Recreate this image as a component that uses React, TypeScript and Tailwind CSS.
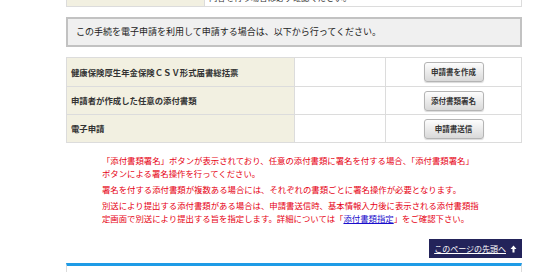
const jp = { fontFamily: '"Noto Sans CJK JP", "Noto Sans", sans-serif' };

type Row = { label: string; button: string };

const rows: Row[] = [
  { label: '健康保険厚生年金保険ＣＳＶ形式届書総括票', button: '申請書を作成' },
  { label: '申請者が作成した任意の添付書類', button: '添付書類署名' },
  { label: '電子申請', button: '申請書送信' },
];

function GrayButton({ children }: { children: string }) {
  return (
    <button
      type="button"
      className="h-[20px] w-[60px] rounded-[3px] border border-[#b4b4b4] bg-gradient-to-b from-[#fdfdfd] to-[#d9d9d9] text-[7.5px] font-bold text-[#333] shadow-[0_1px_1px_rgba(0,0,0,0.15)]"
    >
      {children}
    </button>
  );
}

export default function App() {
  return (
    <div className="h-[272px] w-[548px] overflow-hidden bg-white" style={jp}>
      <div className="ml-[66px] w-[456px]">

        {/* Previous table, clipped by the top edge */}
        <div className="-mt-[14px] flex h-[21px] border border-[#dcdcdc]">
          <div className="w-[137px] bg-[#f2f0e1]" />
          <div className="flex flex-1 items-end border-l border-[#dcdcdc] pb-[4px] pl-[4px] text-[8.4px] leading-[10px] text-[#333]">
            内容を行う場合は必ず確認ください。
          </div>
        </div>

        {/* Header box */}
        <div className="mt-[10px] flex h-[30px] items-center border-2 border-[#c2c2c2] bg-[#f0f0f0] pl-[8px] text-[9px] text-[#222]">
          この手続を電子申請を利用して申請する場合は、以下から行ってください。
        </div>

        {/* Action table */}
        <div className="mt-[10px] border border-[#dcdcdc]">
          {rows.map((r, i) => (
            <div key={r.label} className={`flex h-[28px] ${i > 0 ? 'border-t border-[#dcdcdc]' : ''}`}>
              <div className="flex w-[227px] items-center bg-[#f2f0e1] pl-[4px] text-[8.4px] font-bold text-[#333]">
                {r.label}
              </div>
              <div className="w-[91px] border-l border-[#dcdcdc]" />
              <div className="flex flex-1 items-center justify-center border-l border-[#dcdcdc]">
                <GrayButton>{r.button}</GrayButton>
              </div>
            </div>
          ))}
        </div>

        {/* Notes */}
        <div className="ml-[36px] mt-[11px] flex w-[380px] flex-col gap-[3px] text-[8.4px] leading-[13px] text-[#e60012]">
          <p>「添付書類署名」ボタンが表示されており、任意の添付書類に署名を付する場合、「添付書類署名」ボタンによる署名操作を行ってください。</p>
          <p>署名を付する添付書類が複数ある場合には、それぞれの書類ごとに署名操作が必要となります。</p>
          <p>
            別送により提出する添付書類がある場合は、申請書送信時、基本情報入力後に表示される添付書類指定画面で別送により提出する旨を指定します。詳細については「<a href="#" className="text-[#1a0dcc] underline">添付書類指定</a>」をご確認下さい。
          </p>
        </div>

        {/* Page top */}
        <div className="mt-[14px] flex justify-end">
          <a href="#" className="flex h-[19px] items-center gap-[4px] bg-[#23235a] pl-[5px] pr-[5px] text-[8px] text-white">
            <span className="underline">このページの先頭へ</span>
            <svg width="7" height="8" viewBox="0 0 7 8">
              <path d="M3.5 0.5 L6.5 4 H4.5 V7.5 H2.5 V4 H0.5 Z" fill="white" />
            </svg>
          </a>
        </div>

        {/* Next section top */}
        <div className="mt-[5px] h-[20px] border-x border-[#dcdcdc] border-t-[3px] border-t-[#1e9be6]" />
      </div>
    </div>
  );
}
